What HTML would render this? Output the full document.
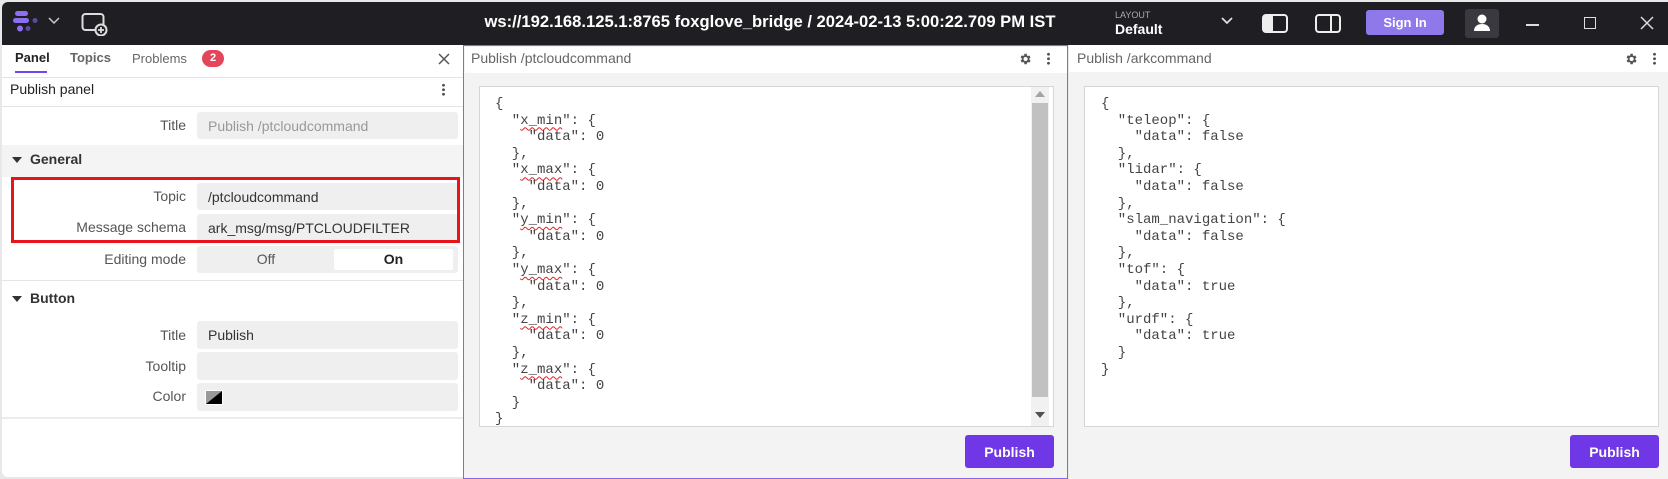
<!DOCTYPE html>
<html><head><meta charset="utf-8"><style>
*{box-sizing:border-box;margin:0;padding:0}
body{width:1668px;height:479px;overflow:hidden;background:#e8e8e8;font-family:"Liberation Sans",sans-serif;position:relative}
.a{position:absolute}
.top{left:2px;top:2px;width:1666px;height:43px;background:#1f1e23;border-radius:6px 0 0 0}
.wt{color:#fff}
.lbl{position:absolute;right:calc(1668px - 186px);font-size:14px;color:#555;text-align:right}
.fld{position:absolute;left:197px;width:261px;background:#efefef;border-radius:3px;font-size:14px;color:#333;padding-left:11px;display:flex;align-items:center}
pre{font-family:"Liberation Mono",monospace;font-size:14px;line-height:16.6px;color:#444}
.sq{text-decoration:underline wavy #e02020;text-underline-offset:3px;text-decoration-thickness:1px}
.btn{background:#6f37e6;color:#fff;font-weight:bold;font-size:14px;border-radius:3px;display:flex;align-items:center;justify-content:center}
</style></head><body>
<div class="a top"></div>
<svg class="a" style="left:12px;top:10px" width="30" height="24" viewBox="0 0 30 24">
<rect x="3" y="1" width="13" height="5" rx="2.5" fill="#8b6ff0"/>
<rect x="1" y="8" width="16" height="5" rx="2.5" fill="#8b6ff0"/>
<circle cx="23" cy="10.5" r="2.5" fill="#5a4aa0"/>
<circle cx="8" cy="18.5" r="3" fill="#8b6ff0"/>
<circle cx="16" cy="18.5" r="2.5" fill="#5a4aa0"/>
</svg>
<svg class="a" style="left:48px;top:17px" width="12" height="8"><path d="M1 1l5 5 5-5" stroke="#ccc" stroke-width="1.5" fill="none"/></svg>
<svg class="a" style="left:81px;top:12px" width="28" height="24"><rect x="1.5" y="2" width="21" height="16" rx="3" stroke="#ddd" stroke-width="2" fill="none"/><circle cx="20" cy="18" r="5.5" fill="#1f1e23" stroke="#ddd" stroke-width="2"/><path d="M20 15v6M17 18h6" stroke="#ddd" stroke-width="1.8"/></svg>
<div class="a wt" style="left:456px;width:628px;top:12px;text-align:center;font-size:16.6px;font-weight:bold;white-space:nowrap">ws://192.168.125.1:8765 foxglove_bridge / 2024-02-13 5:00:22.709 PM IST</div>
<div class="a" style="left:1115px;top:10px;font-size:9px;color:#aaa">LAYOUT</div>
<div class="a wt" style="left:1115px;top:21px;font-size:14px;font-weight:bold">Default</div>
<svg class="a" style="left:1221px;top:17px" width="12" height="8"><path d="M1 1l5 5 5-5" stroke="#ddd" stroke-width="1.8" fill="none"/></svg>
<svg class="a" style="left:1262px;top:14px" width="26" height="20"><rect x="1" y="1" width="24" height="17" rx="3" stroke="#eee" stroke-width="2" fill="none"/><rect x="1" y="1" width="10" height="17" rx="2" fill="#eee"/></svg>
<svg class="a" style="left:1315px;top:14px" width="26" height="20"><rect x="1" y="1" width="24" height="17" rx="3" stroke="#eee" stroke-width="2" fill="none"/><path d="M16 1v17" stroke="#eee" stroke-width="2"/></svg>
<div class="a btn" style="left:1366px;top:10px;width:78px;height:25px;background:#8f78e9;font-size:13px">Sign In</div>
<div class="a" style="left:1465px;top:9px;width:34px;height:29px;background:#3a393f;border-radius:3px"></div>
<svg class="a" style="left:1472px;top:13px" width="20" height="20"><circle cx="10" cy="6" r="4.5" fill="#fff"/><path d="M2 18c0-5 4-7 8-7s8 2 8 7z" fill="#fff"/></svg>
<div class="a" style="left:1526px;top:24px;width:13px;height:1.5px;background:#ddd"></div>
<div class="a" style="left:1584px;top:17px;width:12px;height:12px;border:1.5px solid #ddd"></div>
<svg class="a" style="left:1640px;top:16px" width="14" height="14"><path d="M1 1l12 12M13 1L1 13" stroke="#ddd" stroke-width="1.5"/></svg>

<div class="a" style="left:2px;top:45px;width:461px;height:432px;background:#fff;border-radius:0 0 0 6px"></div>
<div class="a" style="left:15px;top:50px;font-size:13px;color:#222;font-weight:bold">Panel</div>
<div class="a" style="left:15px;top:71px;width:32px;height:2px;background:#6f48e8"></div>
<div class="a" style="left:70px;top:50px;font-size:13px;color:#666;font-weight:bold">Topics</div>
<div class="a" style="left:132px;top:51px;font-size:13px;color:#666">Problems</div>
<div class="a" style="left:202px;top:50px;width:22px;height:17px;border-radius:9px;background:#e5455a;color:#fff;font-size:11px;font-weight:bold;text-align:center;line-height:17px">2</div>
<svg class="a" style="left:438px;top:53px" width="12" height="12"><path d="M1 1l10 10M11 1L1 11" stroke="#555" stroke-width="1.5"/></svg>
<div class="a" style="left:2px;top:77px;width:461px;height:1px;background:#e4e4e4"></div>
<div class="a" style="left:10px;top:81px;font-size:14px;color:#222">Publish panel</div>
<div class="a" style="left:442px;top:83px;width:3px;height:13px;background:radial-gradient(circle,#555 1.3px,transparent 1.6px) 0 0/3px 4.5px"></div>
<div class="a" style="left:2px;top:106px;width:461px;height:1px;background:#e4e4e4"></div>
<div class="lbl" style="top:117px">Title</div>
<div class="fld" style="top:112px;height:27px;color:#999">Publish /ptcloudcommand</div>
<div class="a" style="left:2px;top:145px;width:461px;height:32px;background:#f4f4f4"></div>
<svg class="a" style="left:12px;top:156px" width="10" height="8"><path d="M0 1h10L5 7z" fill="#333"/></svg>
<div class="a" style="left:30px;top:151px;font-size:14px;font-weight:bold;color:#333">General</div>
<div class="lbl" style="top:188px">Topic</div>
<div class="fld" style="top:183px;height:27px">/ptcloudcommand</div>
<div class="lbl" style="top:219px">Message schema</div>
<div class="fld" style="top:214px;height:28px">ark_msg/msg/PTCLOUDFILTER</div>
<div class="a" style="left:11px;top:177px;width:449px;height:66px;border:3px solid #e8141c"></div>
<div class="lbl" style="top:251px">Editing mode</div>
<div class="fld" style="top:246px;height:27px;padding:0"></div>
<div class="a" style="left:236px;top:251px;width:60px;text-align:center;font-size:14px;color:#555">Off</div>
<div class="a" style="left:334px;top:249px;width:119px;height:21px;background:#fff;border-radius:2px;text-align:center;font-size:14px;font-weight:bold;color:#222;line-height:21px">On</div>
<div class="a" style="left:2px;top:280px;width:461px;height:1px;background:#e4e4e4"></div>
<svg class="a" style="left:12px;top:295px" width="10" height="8"><path d="M0 1h10L5 7z" fill="#333"/></svg>
<div class="a" style="left:30px;top:290px;font-size:14px;font-weight:bold;color:#333">Button</div>
<div class="lbl" style="top:327px">Title</div>
<div class="fld" style="top:321px;height:28px">Publish</div>
<div class="lbl" style="top:358px">Tooltip</div>
<div class="fld" style="top:352px;height:28px"></div>
<div class="lbl" style="top:388px">Color</div>
<div class="fld" style="top:383px;height:28px"></div>
<svg class="a" style="left:205px;top:390px" width="18" height="15"><rect width="18" height="15" fill="#fff"/><path d="M1 1h16v13H1z" fill="#999"/><path d="M17 1v13H1z" fill="#000"/></svg>
<div class="a" style="left:2px;top:417px;width:461px;height:2px;background:#ececec"></div>

<div class="a" style="left:463px;top:45px;width:605px;height:434px;background:#f3f3f3;border:1.5px solid #8467ee"></div>
<div class="a" style="left:464.5px;top:46.5px;width:602px;height:26px;background:#fff"></div>
<div class="a" style="left:471px;top:50px;font-size:14px;color:#666">Publish /ptcloudcommand</div>
<svg class="a" style="left:1018px;top:52px" width="14" height="14" viewBox="0 0 24 24"><path fill="#555" d="M19.4 13a7.5 7.5 0 0 0 0-2l2.1-1.6-2-3.5-2.5 1a7 7 0 0 0-1.7-1L15 3h-4l-.4 2.7a7 7 0 0 0-1.7 1l-2.5-1-2 3.5L6.6 11a7.5 7.5 0 0 0 0 2l-2.2 1.6 2 3.5 2.5-1a7 7 0 0 0 1.7 1L11 21h4l.4-2.7a7 7 0 0 0 1.7-1l2.5 1 2-3.5zM13 15.5A3.5 3.5 0 1 1 13 8.5a3.5 3.5 0 0 1 0 7z"/></svg>
<div class="a" style="left:1047px;top:52px;width:3px;height:13px;background:radial-gradient(circle,#555 1.3px,transparent 1.6px) 0 0/3px 4.5px"></div>
<div class="a" style="left:479px;top:86px;width:575px;height:341px;background:#fff;border:1px solid #d6d6d6;overflow:hidden">
<pre style="position:absolute;left:15px;top:9px">{
  "<span class="sq">x_min</span>": {
    "data": 0
  },
  "<span class="sq">x_max</span>": {
    "data": 0
  },
  "<span class="sq">y_min</span>": {
    "data": 0
  },
  "<span class="sq">y_max</span>": {
    "data": 0
  },
  "<span class="sq">z_min</span>": {
    "data": 0
  },
  "<span class="sq">z_max</span>": {
    "data": 0
  }
}</pre>
<div class="a" style="left:551px;top:0;width:18px;height:339px;background:#f1f1f1"></div>
<div class="a" style="left:552px;top:16px;width:16px;height:294px;background:#c1c1c1"></div>
<svg class="a" style="left:555px;top:4px" width="10" height="6"><path d="M0 6h10L5 0z" fill="#a3a3a3"/></svg>
<svg class="a" style="left:555px;top:325px" width="10" height="6"><path d="M0 0h10L5 6z" fill="#505050"/></svg>
</div>
<div class="a btn" style="left:965px;top:435px;width:89px;height:33px">Publish</div>

<div class="a" style="left:1069px;top:45px;width:599px;height:434px;background:#f3f3f3"></div>
<div class="a" style="left:1069px;top:45px;width:599px;height:27px;background:#fff"></div>
<div class="a" style="left:1077px;top:50px;font-size:14px;color:#666">Publish /arkcommand</div>
<svg class="a" style="left:1624px;top:52px" width="14" height="14" viewBox="0 0 24 24"><path fill="#555" d="M19.4 13a7.5 7.5 0 0 0 0-2l2.1-1.6-2-3.5-2.5 1a7 7 0 0 0-1.7-1L15 3h-4l-.4 2.7a7 7 0 0 0-1.7 1l-2.5-1-2 3.5L6.6 11a7.5 7.5 0 0 0 0 2l-2.2 1.6 2 3.5 2.5-1a7 7 0 0 0 1.7 1L11 21h4l.4-2.7a7 7 0 0 0 1.7-1l2.5 1 2-3.5zM13 15.5A3.5 3.5 0 1 1 13 8.5a3.5 3.5 0 0 1 0 7z"/></svg>
<div class="a" style="left:1653px;top:52px;width:3px;height:13px;background:radial-gradient(circle,#555 1.3px,transparent 1.6px) 0 0/3px 4.5px"></div>
<div class="a" style="left:1084px;top:86px;width:575px;height:341px;background:#fff;border:1px solid #d6d6d6;overflow:hidden">
<pre style="position:absolute;left:16px;top:9px">{
  "teleop": {
    "data": false
  },
  "lidar": {
    "data": false
  },
  "slam_navigation": {
    "data": false
  },
  "tof": {
    "data": true
  },
  "urdf": {
    "data": true
  }
}</pre>
</div>
<div class="a btn" style="left:1570px;top:435px;width:89px;height:33px">Publish</div>
</body></html>
